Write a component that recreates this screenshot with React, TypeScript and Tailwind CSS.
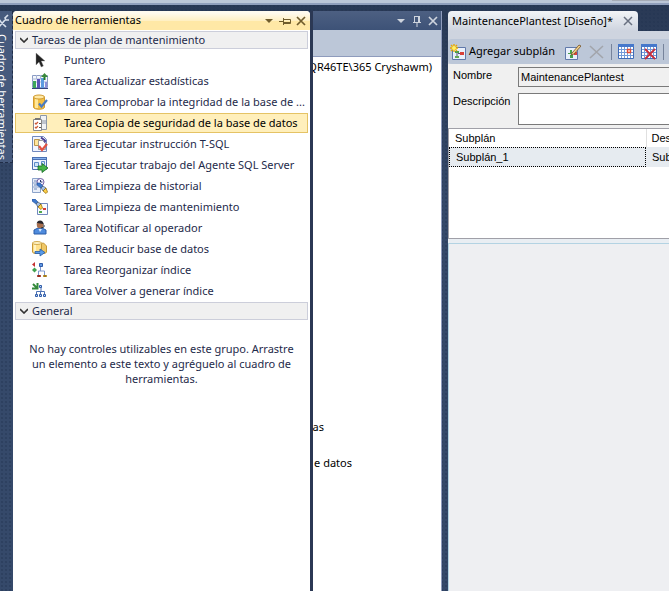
import type { ReactNode } from "react";

function Icon({ children }: { children: ReactNode }) {
  return (
    <svg width="16" height="16" viewBox="0 0 16 16" className="block shrink-0" aria-hidden="true">
      {children}
    </svg>
  );
}

const Check = ({ color }: { color: string }) => (
  <path d="M7 9.5l2.5 3L15 6" fill="none" stroke={color} strokeWidth="2.2" />
);

const Brush = ({ x = 0, y = 0 }: { x?: number; y?: number }) => (
  <g transform={`translate(${x} ${y})`}>
    <path d="M0 0h3l3 3-2 2-4-3z" fill="#3e78cc" stroke="#1f4f99" strokeWidth=".6" />
    <path d="M4 5l2-2 3 2-3 3z" fill="#a6bfe0" stroke="#345" strokeWidth=".6" />
    <path d="M6 8l3-3 1.500 4-1.500 1.500z" fill="#ffd24a" stroke="#8a6200" strokeWidth=".7" />
  </g>
);

const icons: Record<string, ReactNode> = {
  pointer: (
    <path d="M4 1v12l3-3 2.200 5 2.200-1L9.200 9H13z" fill="#222" stroke="#888" strokeWidth=".4" />
  ),
  stats: (
    <>
      <path d="M.5 2.500h15v12H.5z" fill="#f4f7fc" stroke="#8b9cc4" />
      <path d="M0 6h12M0 9h15M4.500 2v4M8.500 2v4" stroke="#a9b6d6" />
      <path d="M1 8h3v7H1z" fill="#3ca65a" />
      <path d="M5 6h3v9H5z" fill="#5a55b8" />
      <path d="M9 5h3v10H9z" fill="#5d9be0" />
      <path d="M13 9h2v6h-2z" fill="#8d8fd8" />
      <path d="M12.500 7V3" stroke="#217a2c" strokeWidth="2" />
      <path d="M9 4l3.500-4L16 4z" fill="#3a8a3a" />
      <path d="M0 15.500h16" stroke="#35457f" />
    </>
  ),
  integrity: (
    <>
      <path d="M1.500 3v10c0 3 11 3 11 0V3z" fill="#f3bf45" stroke="#d09a30" />
      <path d="M3 4h3v10H3z" fill="#ffe79a" />
      <ellipse cx="7" cy="3" rx="5.500" ry="2" fill="#ffe9a6" stroke="#d09a30" />
      <Check color="#4a7cc2" />
    </>
  ),
  backup: (
    <>
      <path d="M8.500.5h6v14h-6z" fill="#f1f3f5" stroke="#8d98a8" />
      <path d="M9 6h5M9 8h5" stroke="#8d98a8" />
      <path d="M1.500 4.500h8v11h-8z" fill="#fff" stroke="#888" />
      <path d="M3 3h5v2H3z" fill="#777" />
      <path d="M3 8l1 1 2-2M3 12l1 1 2-2" fill="none" stroke="#cf5a35" strokeWidth="1.300" />
      <path d="M7 8.500h2M7 12.500h2" stroke="#555" />
    </>
  ),
  tsql: (
    <>
      <path d="M.5.5h11l3 3v12H.5z" fill="#f1f4ff" stroke="#7189bd" />
      <path d="M2.500 3.500h5v6h-5z" fill="#ffe49a" stroke="#bb974e" />
      <path d="M6.500 4.500h4l3 3v6h-7z" fill="#fff" stroke="#777" strokeWidth=".7" />
      <path d="M9 1.500l4 3v2" fill="none" stroke="#493f93" strokeWidth="1.800" />
      <path d="M7 10l3 4 5-6" fill="none" stroke="#e35342" strokeWidth="2.200" />
    </>
  ),
  job: (
    <>
      <path d="M.5.500h14v12H.5z" fill="#eef4ff" stroke="#4c70b2" />
      <path d="M0 0h15v3H0z" fill="#4c70b2" />
      <path d="M1 1h13v1H1z" fill="#86b2ee" />
      <path d="M2.500 5.500h4v4h-4zM9.500 4.500h3v3h-3z" fill="#cfe5f8" stroke="#5d8ccb" />
      <path d="M6 9h4V6.500l6 4.500-6 4.500V13H6z" fill="#45b548" stroke="#176a23" strokeWidth=".8" />
    </>
  ),
  history: (
    <>
      <path d="M.5.500h8v14h-8z" fill="#e8eef9" stroke="#8ca3ca" />
      <path d="M1 5h7M1 9h7" stroke="#8ca3ca" />
      <path d="M2 3h3M2 7h3M2 11h3" stroke="#6d88b8" />
      <circle cx="8.500" cy="4" r="3.500" fill="#f5f3ff" stroke="#7560a4" />
      <path d="M8.500 2v2h2" fill="none" stroke="#24356b" />
      <Brush x={5} y={5} />
    </>
  ),
  maintenance: (
    <>
      <path d="M5.500 4.500h10v11h-10z" fill="#f8fbff" stroke="#7189bd" />
      <path d="M11 9h3v2h-3z" fill="#d93d34" />
      <path d="M7 12h3v2H7z" fill="#51a84d" />
      <Brush />
    </>
  ),
  operator: (
    <>
      <path d="M2 14v-4l4-2h4l4 2v4z" fill="#4e8bdd" stroke="#2a5ca8" />
      <circle cx="8" cy="5" r="3.200" fill="#a86e4c" />
      <path d="M4.500 5c0-6 7.500-6 7.500 1l-1-2-6-1z" fill="#28262c" />
      <path d="M12 5v2l-3 1" fill="none" stroke="#333" />
      <path d="M6.500 9l1.500 3 2-3z" fill="#d9eaff" />
    </>
  ),
  shrink: (
    <>
      <path d="M6.500 3v8c0 2 8 2 8 0V5l-3-3z" fill="#efc868" stroke="#c79937" />
      <path d="M.5 2v9c0 2 9 2 9 0V2z" fill="#ffe08a" stroke="#c79937" />
      <path d="M2 4h2v7H2z" fill="#fff3c4" />
      <ellipse cx="5" cy="2" rx="4.500" ry="1.500" fill="#fff4c6" stroke="#d3aa4e" />
      <path d="M3 10.500h5V8l5 3.500L8 15v-2.500H3z" fill="#5a9be8" stroke="#245daa" strokeWidth=".8" />
    </>
  ),
  reorganize: (
    <>
      <path d="M0 2.500L3 0v5z" fill="#c63030" />
      <path d="M0 8l2.500-2.500L5 8l-2.500 2.500z" fill="#40a150" />
      <path d="M8.500 5v4M6.500 13V9h6v4" fill="none" stroke="#7d97cd" />
      <path d="M7.500 1.500h3v3h-3z" fill="#5f98e4" stroke="#315ca8" />
      <path d="M5.500 13.500h3v1h-3z" fill="#df5140" stroke="#98291d" />
      <path d="M11.500 13.500h3v1h-3z" fill="#ffd75c" stroke="#a57b18" />
    </>
  ),
  rebuild: (
    <>
      <path d="M1 1l4 4M5.500 0v5.500H0" fill="none" stroke="#348a3c" strokeWidth="2" />
      <path d="M9 4v4M4.500 12V8.500h8V12M8.500 8v4" fill="none" stroke="#4d72b5" />
      <path d="M7.500 2.500h2v2h-2zM3.500 11.500h2v2h-2zM7.500 11.500h2v2h-2zM11.500 11.500h2v2h-2z" fill="#bcd7fa" stroke="#315ca8" />
    </>
  ),
};

const tasks: [string, string][] = [
  ["pointer", "Puntero"],
  ["stats", "Tarea Actualizar estadísticas"],
  ["integrity", "Tarea Comprobar la integridad de la base de ..."],
  ["backup", "Tarea Copia de seguridad de la base de datos"],
  ["tsql", "Tarea Ejecutar instrucción T-SQL"],
  ["job", "Tarea Ejecutar trabajo del Agente SQL Server"],
  ["history", "Tarea Limpieza de historial"],
  ["maintenance", "Tarea Limpieza de mantenimiento"],
  ["operator", "Tarea Notificar al operador"],
  ["shrink", "Tarea Reducir base de datos"],
  ["reorganize", "Tarea Reorganizar índice"],
  ["rebuild", "Tarea Volver a generar índice"],
];

function WindowButtons({ pinned }: { pinned: boolean }) {
  return (
    <div className="flex shrink-0 items-center">
      <button aria-label="Opciones" className="flex w-4 justify-center">
        <svg width="8" height="4" viewBox="0 0 8 4"><path d="M0 0h8L4 4z" fill="currentColor" /></svg>
      </button>
      <button aria-label="Ocultar automáticamente" className="flex w-4 justify-center">
        <svg width="12" height="12" viewBox="0 0 12 12" fill="none" stroke="currentColor">
          {pinned ? <path d="M3.500 1v6M2 7.500h8M3 1.500h5M7.500 1v6M8.500 1v6M6 8v4" /> : <path d="M0 6.500h4M4.500 3v7M5 4.500h6.500v4H5M5 7.500h6" />}
        </svg>
      </button>
      <button aria-label="Cerrar" className="flex w-4 justify-center">
        <svg width="10" height="10" viewBox="0 0 10 10"><path d="M1 1l8 8M9 1L1 9" stroke="currentColor" strokeWidth="1.700" /></svg>
      </button>
    </div>
  );
}

function GroupHeader({ children }: { children: string }) {
  return (
    <button className="flex h-[18px] w-full shrink-0 items-center gap-1 border border-[#ccceda] bg-[#f0f0f0] pl-1 text-left">
      <svg width="8" height="6" viewBox="0 0 8 6"><path d="M0 1l4 4 4-4" fill="none" stroke="#333" strokeWidth="1.600" /></svg>
      {children}
    </button>
  );
}

function Toolbox() {
  return (
    <aside className="flex w-[297px] shrink-0 flex-col rounded-t-sm bg-white">
      <header className="flex h-[19px] items-center justify-between rounded-t-sm bg-linear-to-b from-[#fffbef] from-10% via-[#fff0c4] via-50% to-[#ffe8a6] to-55% pr-px pl-[2px] text-[#705c2c]">
        <h2 className="text-black">Cuadro de herramientas</h2>
        <WindowButtons pinned={false} />
      </header>
      <div className="flex flex-col gap-px px-[2px] pt-px">
        <GroupHeader>Tareas de plan de mantenimiento</GroupHeader>
        {tasks.map(([icon, name]) => (
          <button
            key={name}
            className={
              icon === "backup"
                ? "flex h-5 items-center gap-4 border border-[#e5c365] bg-[#ffefbb] pl-4 text-left whitespace-nowrap text-black"
                : "flex h-5 items-center gap-4 border border-transparent pl-4 text-left whitespace-nowrap"
            }
          >
            <Icon>{icons[icon]}</Icon>
            {name}
          </button>
        ))}
        <GroupHeader>General</GroupHeader>
        <p className="px-2 pt-5 text-center leading-[15px]">
          No hay controles utilizables en este grupo. Arrastre un elemento a este texto y agréguelo al cuadro de herramientas.
        </p>
      </div>
    </aside>
  );
}

function Explorer() {
  return (
    <section className="flex w-[129px] shrink-0 flex-col overflow-hidden border-r border-[#8e9bbc] bg-white text-black">
      <header className="flex h-[19px] shrink-0 items-center justify-end bg-linear-to-b from-[#4d6082] to-[#3d5277] text-[#ced4dd]">
        <WindowButtons pinned />
      </header>
      <div className="h-[27px] shrink-0 border-b border-[#8e9bbc] bg-[#bcc7d8]" />
      <ul className="pt-px leading-[18px] whitespace-nowrap">
        <li className="flex justify-end pr-[9px]">QR46TE\365 Cryshawm)</li>
        <li className="mt-[342px] flex justify-end pr-[117px]">as</li>
        <li className="mt-[18px] flex justify-end pr-[89px]">e datos</li>
      </ul>
    </section>
  );
}

const Spark = () => (
  <g>
    <path d="M4 0v8M0 4h8M1 1l6 6M7 1L1 7" stroke="#e9a900" strokeWidth="1.400" />
    <circle cx="4" cy="4" r="2" fill="#fff06a" />
  </g>
);

const PlanSheet = () => (
  <>
    <path d="M2.500 3.500h13v12h-13z" fill="#e9f0fb" stroke="#6079aa" />
    <path d="M7 9v3M8 9.500h3" fill="none" stroke="#557" />
    <path d="M5 7h4v2H5z" fill="#4da04a" />
    <path d="M10 8h4v3h-4z" fill="#d9413a" />
    <path d="M5 12h4v2H5z" fill="#65a957" />
  </>
);

const Calendar = () => (
  <>
    <path d="M.5.500h15v14H.5z" fill="#fff" stroke="#416cb6" />
    <path d="M0 0h16v3H0z" fill="#4678cb" />
    <path d="M3.500 3v11M6.500 3v11M9.500 3v11M12.500 3v11M1 5.500h14M1 8.500h14M1 11.500h14" stroke="#739bd8" />
  </>
);

function Designer() {
  return (
    <main className="flex min-w-0 flex-1 flex-col overflow-hidden text-black">
      <div className="flex h-5 shrink-0">
        <div className="flex shrink-0 items-center gap-[10px] rounded-t-sm bg-linear-to-b from-[#f2f4f7] to-[#ced4df] pr-[5px] pl-1 whitespace-nowrap">
          <span>MaintenancePlantest [Diseño]*</span>
          <button aria-label="Cerrar documento">
            <svg width="10" height="10" viewBox="0 0 10 10"><path d="M1 1l8 8M9 1L1 9" stroke="#687080" strokeWidth="1.500" /></svg>
          </button>
        </div>
      </div>
      <div className="shrink-0 bg-[#ced4df] pt-2">
        <div className="flex h-[25px] items-center rounded-l-sm bg-[#bcc7d8] pl-[2px]">
          <button className="flex shrink-0 items-center gap-[3px] whitespace-nowrap">
            <Icon><PlanSheet /><Spark /></Icon>Agregar subplán
          </button>
          <div className="ml-[10px] flex shrink-0 items-center gap-2">
            <button aria-label="Editar subplán"><Icon><path d="M.5 3.500h12v12H.5z" fill="#e9f0fb" stroke="#6079aa" /><path d="M5 6h2v3H5zM3 9h6v1H3zM5 11h3v3H5z" fill="#46a04a" /><path d="M9 8h3v3H9z" fill="#d9413a" /><path d="M7 9L14 1l2 1-7 8-3 1z" fill="#f5d28a" stroke="#704c22" strokeWidth=".8" /></Icon></button>
            <button aria-label="Eliminar subplán"><Icon><path d="M1 2l13 12M14 2L1 14" stroke="#a2a5ab" strokeWidth="1.600" /></Icon></button>
          </div>
          <div className="ml-[6px] flex shrink-0 items-center gap-[6px]">
            <span className="h-4 w-px bg-[#76839b]" />
            <button aria-label="Programar"><Icon><Calendar /><path d="M9.500 5.500h3v3h-3z" fill="#fff" stroke="#e34c33" strokeWidth="1.400" /></Icon></button>
            <button aria-label="Quitar programación" className="ml-px"><Icon><Calendar /><path d="M4 5l10 10M14 5L4 15" stroke="#c82d3b" strokeWidth="1.800" /></Icon></button>
            <span className="h-4 w-px bg-[#76839b]" />
            <button aria-label="Administrar conexiones"><Icon><PlanSheet /><Spark /></Icon></button>
          </div>
        </div>
      </div>
      <form className="flex shrink-0 flex-col gap-[6px] bg-[#f0f0f0] pt-[3px] pb-[3px] pl-[5px] font-['Liberation_Sans',sans-serif]">
        <div className="flex">
          <label htmlFor="plan-name" className="w-[65px] shrink-0 leading-4">Nombre</label>
          <input id="plan-name" readOnly value="MaintenancePlantest" className="h-5 min-w-0 flex-1 border border-r-0 border-[#7a7a7a] bg-[#f0f0f0] px-[2px]" />
        </div>
        <div className="flex">
          <label htmlFor="plan-description" className="w-[65px] shrink-0 leading-4">Descripción</label>
          <textarea id="plan-description" className="block h-8 min-w-0 flex-1 resize-none border border-r-0 border-[#7a7a7a] bg-white px-[2px]" />
        </div>
      </form>
      <div className="h-[111px] shrink-0 overflow-hidden border-y border-l border-[#a0a0a8] bg-white font-['Liberation_Sans',sans-serif]">
        <table className="w-full min-w-[400px] table-fixed border-collapse text-left">
          <thead>
            <tr className="h-[18px]">
              <th className="w-[197px] border-r border-[#e0e0e0] pl-[6px] font-normal">Subplán</th>
              <th className="pl-[5px] font-normal">Descripción</th>
            </tr>
          </thead>
          <tbody>
            <tr className="h-5 bg-[#e6ebf0]">
              <td className="pl-[7px] outline-1 -outline-offset-1 outline-black outline-dotted">Subplán_1</td>
              <td className="pl-[6px]">Subplán_1</td>
            </tr>
          </tbody>
        </table>
      </div>
      <div className="flex flex-1 flex-col bg-[#e9eef3] pt-1">
        <div className="flex-1 border-t border-l border-[#b3d3e3] bg-[#eeeff2]" />
      </div>
    </main>
  );
}

export default function App() {
  return (
    <div className="flex h-screen flex-col overflow-hidden bg-[#293955] bg-[radial-gradient(circle,#22335066_0.8px,transparent_1px),linear-gradient(#293955_0px,#35496a_200px)] bg-size-[4px_4px,100%_100%] font-['Noto_Sans','Open_Sans',sans-serif] text-[11px] text-[#1e2a4a]">
      <div className="flex h-[5px] shrink-0 justify-end border-b-2 border-[#909fbc] bg-[#bcc7d8]">
        <span className="h-px w-[57px] bg-[#a5abb6]" />
      </div>
      <div className="flex min-h-0 flex-1 pt-[6px]">
        <nav className="w-[13px] shrink-0">
          <button className="flex h-[152px] w-[13px] flex-col items-end overflow-hidden border-r border-b border-dashed border-[#202d47] bg-[#465a7d] pt-[3px] text-white">
            <svg width="16" height="16" viewBox="0 0 16 16" className="mr-[3px] shrink-0" aria-hidden="true">
              <path d="M2 5l3-1 3 4 5 5M15 1l-3 3 1 2 3 0M12 6l-7 8" fill="none" stroke="#d9e0ec" strokeWidth="1.600" />
            </svg>
            <span className="mr-[2px] pt-1 leading-4 whitespace-nowrap [writing-mode:vertical-rl]">Cuadro de herramientas</span>
          </button>
        </nav>
        <Toolbox />
        <div className="w-[3px] shrink-0 bg-[#2b3854]" />
        <Explorer />
        <div className="w-[6px] shrink-0" />
        <Designer />
      </div>
    </div>
  );
}
